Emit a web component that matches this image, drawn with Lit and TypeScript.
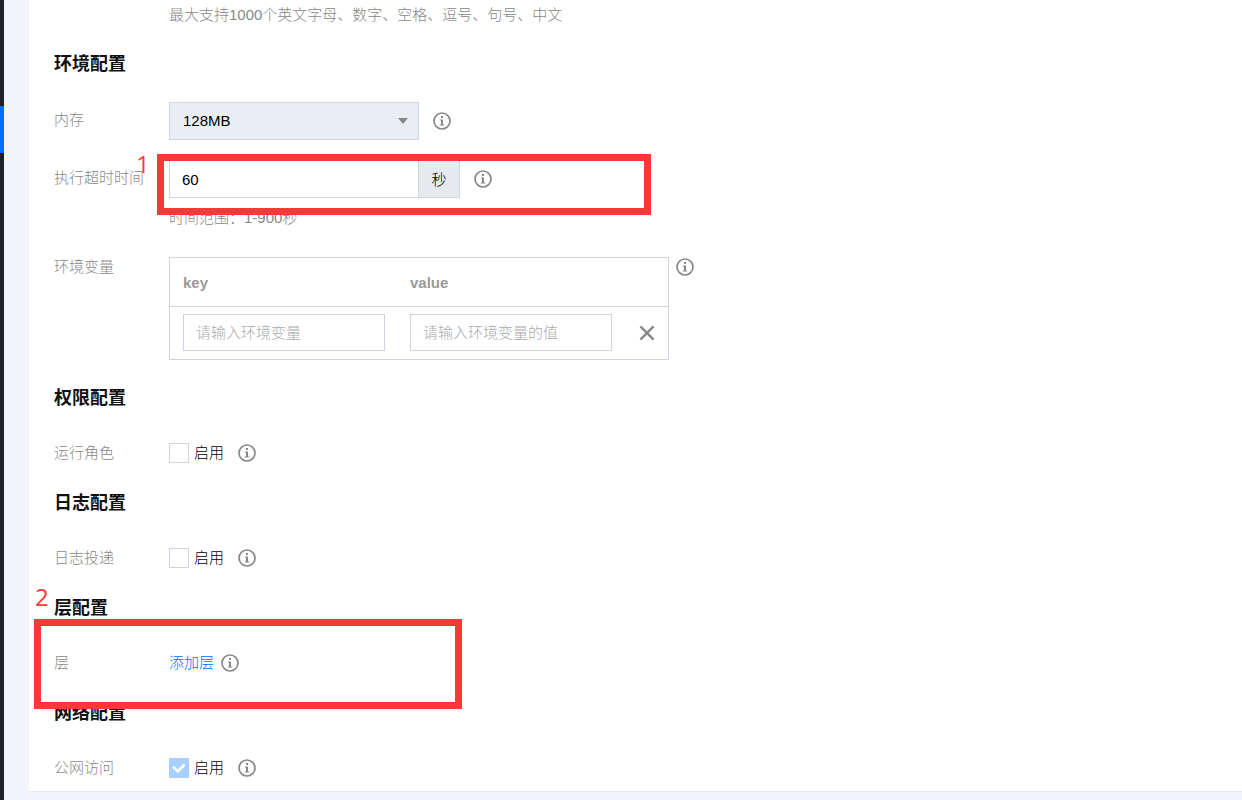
import { LitElement, html, css } from "lit";
import { customElement, property } from "lit/decorators.js";

const controls = css`
  * {
    box-sizing: border-box;
  }
  input,
  select,
  button {
    font: inherit;
    color: inherit;
    margin: 0;
    border-radius: 0;
  }
`;

@customElement("info-tip")
export class InfoTip extends LitElement {
  static styles = css`
    :host {
      display: flex;
      align-items: center;
      height: 24px;
      flex: none;
    }
    .icon {
      display: block;
      width: 18px;
      height: 18px;
    }
  `;

  render() {
    return html`
      <svg class="icon" viewBox="0 0 18 18" role="img" aria-label="说明">
        <circle cx="9" cy="9" r="8" fill="none" stroke="#888" stroke-width="1.7" />
        <path
          d="M8 4h2v2H8zM7 7.4h3v5h1.2v1.2H6.8v-1.2H8V8.6H7z"
          fill="#888"
        />
      </svg>
    `;
  }
}

@customElement("form-row")
export class FormRow extends LitElement {
  @property() label = "";

  static styles = css`
    :host {
      display: grid;
      grid-template-columns: 115px minmax(0, 1fr);
    }
    .label {
      color: #888;
      padding-top: var(--label-pad, 0);
    }
  `;

  render() {
    return html`
      <div class="label">${this.label}</div>
      <div><slot></slot></div>
    `;
  }
}

@customElement("enable-box")
export class EnableBox extends LitElement {
  @property({ type: Boolean }) checked = false;
  @property({ type: Boolean }) disabled = false;
  @property() name = "";

  static styles = [
    controls,
    css`
      :host {
        display: flex;
        align-items: center;
        gap: 14px;
      }
      .choice {
        display: flex;
        align-items: center;
        gap: 5px;
        color: #000;
      }
      .box {
        display: grid;
        width: 20px;
        height: 20px;
      }
      .box > * {
        grid-area: 1 / 1;
      }
      .tick {
        appearance: none;
        width: 20px;
        height: 20px;
        border: 1px solid #cfd5de;
        background: #fff;
      }
      .tick:checked {
        border-color: #a9cfff;
        background: #a9cfff;
      }
      .mark {
        display: none;
        pointer-events: none;
      }
      .tick:checked + .mark {
        display: block;
      }
    `,
  ];

  render() {
    return html`
      <label class="choice">
        <span class="box">
          <input
            class="tick"
            type="checkbox"
            aria-label=${this.name + " 启用"}
            .checked=${this.checked}
            ?disabled=${this.disabled}
          />
          <svg class="mark" width="20" height="20" viewBox="0 0 20 20" aria-hidden="true">
            <path d="M4 8.6l4.7 4.7 6.8-6.8" fill="none" stroke="#fff" stroke-width="2.6" />
          </svg>
        </span>
        <span>启用</span>
      </label>
      <info-tip></info-tip>
    `;
  }
}

@customElement("app-root")
export class AppRoot extends LitElement {
  static styles = [
    controls,
    css`
      :host {
        display: block;
        position: relative;
        overflow: hidden;
        background: #f3f4f9;
        color: #000;
        font: 300 15px/24px "Liberation Sans", "Noto Sans CJK SC", sans-serif;
      }
      .page {
        display: grid;
        grid-template-columns: 4px minmax(0, 1fr);
        min-height: 100vh;
      }
      .rail {
        background: #1d2027;
        padding-top: 106px;
      }
      .current {
        display: block;
        height: 47px;
        background: #006eff;
      }
      .main {
        padding-left: 25px;
      }
      .card {
        background: #fff;
        border-bottom: 1px solid #e5e8ee;
        padding: 3px 25px 11px;
      }
      .hint {
        margin: 0;
        color: #888;
      }
      .title {
        margin: 0 0 26px;
        color: #111;
        font-size: 18px;
        line-height: 24px;
        font-weight: 700;
      }
      .section {
        margin-top: 26px;
      }
      .section.first {
        margin-top: 25px;
      }
      .tall {
        --label-pad: 6px;
        margin-bottom: 20px;
      }
      .timeout {
        margin-bottom: 25px;
      }
      .short {
        padding-top: 5px;
      }
      .line {
        display: flex;
        align-items: center;
        gap: 14px;
      }
      .picker {
        display: grid;
        align-items: center;
        width: 250px;
      }
      .picker > * {
        grid-area: 1 / 1;
      }
      .select {
        appearance: none;
        width: 100%;
        height: 38px;
        padding: 0 13px;
        border: 1px solid #cfd5e0;
        background: #eaedf2;
      }
      .arrow {
        justify-self: end;
        margin-right: 11px;
        pointer-events: none;
      }
      .group {
        display: flex;
      }
      .seconds {
        width: 250px;
        height: 38px;
        padding: 0 12px;
        border: 1px solid #cfd5e0;
        background: #fff;
      }
      .unit {
        width: 41px;
        border: 1px solid #cfd5e0;
        border-left: 0;
        background: #e6e9ee;
        text-align: center;
        line-height: 38px;
        height: 38px;
      }
      .range {
        margin-top: 8px;
      }
      .env {
        display: flex;
        align-items: flex-start;
        gap: 7px;
      }
      .vars {
        width: 500px;
        margin-top: 2px;
        border: 1px solid #cfd3e0;
        border-spacing: 0;
        table-layout: fixed;
      }
      .vars th,
      .vars td {
        padding: 0 0 0 13px;
        text-align: left;
      }
      .vars th {
        height: 49px;
        padding-top: 2px;
        border-bottom: 1px solid #cfd3e0;
        color: #999;
        font-weight: 700;
      }
      .vars td {
        height: 52px;
        padding-bottom: 1px;
      }
      .wide {
        width: 227px;
      }
      .field {
        display: block;
        width: 202px;
        height: 37px;
        padding: 0 12px;
        border: 1px solid #cfd3e0;
        background: #fff;
      }
      .field::placeholder {
        color: #aaa;
      }
      .remove {
        display: block;
        width: 20px;
        height: 20px;
        padding: 0;
        border: 0;
        background: none;
      }
      .cross {
        display: block;
      }
      .layer {
        display: flex;
        align-items: center;
        gap: 7px;
      }
      .link {
        color: #006eff;
        text-decoration: none;
      }
      .frame {
        position: absolute;
        border: 7px solid #fb3838;
        pointer-events: none;
      }
      .frame.one {
        left: 157px;
        top: 154px;
        width: 494px;
        height: 61px;
      }
      .frame.two {
        left: 34px;
        top: 619px;
        width: 428px;
        height: 90px;
      }
      .number {
        position: absolute;
        color: #fb3838;
        font: 400 24px/24px "Open Sans", sans-serif;
      }
      .number.one {
        left: 136px;
        top: 152px;
      }
      .number.two {
        left: 35px;
        top: 585px;
      }
    `,
  ];

  render() {
    return html`
      <div class="page">
        <nav class="rail"><span class="current"></span></nav>
        <main class="main">
          <form class="card">
            <form-row><p class="hint">最大支持1000个英文字母、数字、空格、逗号、句号、中文</p></form-row>

            <section class="section first">
              <h2 class="title">环境配置</h2>
              <form-row class="tall" label="内存">
                <div class="line">
                  <div class="picker">
                    <select class="select" aria-label="内存">
                      <option>128MB</option>
                    </select>
                    <svg class="arrow" width="10" height="6" viewBox="0 0 10 6" aria-hidden="true">
                      <path d="M0 0h10L5 6z" fill="#888" />
                    </svg>
                  </div>
                  <info-tip></info-tip>
                </div>
              </form-row>
              <form-row class="tall timeout" label="执行超时时间">
                <div class="line">
                  <div class="group">
                    <input class="seconds" type="text" value="60" aria-label="执行超时时间" />
                    <span class="unit">秒</span>
                  </div>
                  <info-tip></info-tip>
                </div>
                <p class="hint range">时间范围：1-900秒</p>
              </form-row>
              <form-row label="环境变量">
                <div class="env">
                  <table class="vars">
                    <thead>
                      <tr>
                        <th class="wide">key</th>
                        <th class="wide">value</th>
                        <th></th>
                      </tr>
                    </thead>
                    <tbody>
                      <tr>
                        <td><input class="field" type="text" aria-label="key" placeholder="请输入环境变量" /></td>
                        <td><input class="field" type="text" aria-label="value" placeholder="请输入环境变量的值" /></td>
                        <td>
                          <button class="remove" type="button" aria-label="删除">
                            <svg class="cross" width="20" height="20" viewBox="0 0 20 20">
                              <path d="M3.4 3.4l13.2 13.2M16.6 3.4L3.4 16.6" stroke="#888" stroke-width="2.4" />
                            </svg>
                          </button>
                        </td>
                      </tr>
                    </tbody>
                  </table>
                  <info-tip></info-tip>
                </div>
              </form-row>
            </section>

            <section class="section">
              <h2 class="title">权限配置</h2>
              <form-row class="short" label="运行角色"><enable-box name="运行角色"></enable-box></form-row>
            </section>

            <section class="section">
              <h2 class="title">日志配置</h2>
              <form-row class="short" label="日志投递"><enable-box name="日志投递"></enable-box></form-row>
            </section>

            <section class="section">
              <h2 class="title">层配置</h2>
              <form-row class="short" label="层">
                <div class="layer"><a class="link" href="#">添加层</a><info-tip></info-tip></div>
              </form-row>
            </section>

            <section class="section">
              <h2 class="title">网络配置</h2>
              <form-row class="short" label="公网访问">
                <enable-box name="公网访问" checked disabled></enable-box>
              </form-row>
            </section>
          </form>
        </main>
      </div>
      <span class="number one">1</span>
      <div class="frame one"></div>
      <span class="number two">2</span>
      <div class="frame two"></div>
    `;
  }
}
